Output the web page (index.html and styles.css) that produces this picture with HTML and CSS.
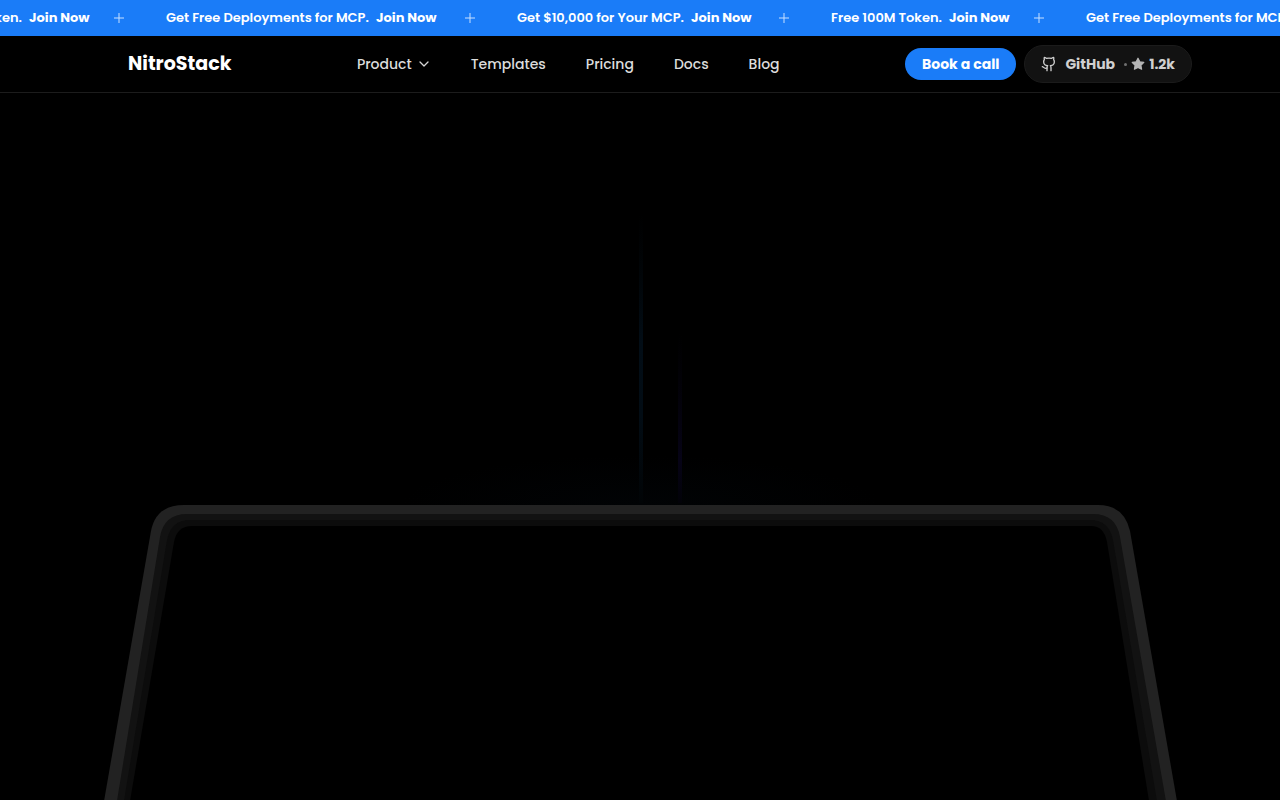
FILE: index.html
```html
<!DOCTYPE html>
<html lang="en">
<head>
<meta charset="utf-8">
<meta name="viewport" content="width=device-width, initial-scale=1">
<title>NitroStack</title>
<link rel="stylesheet" href="styles.css">
</head>
<body>
<div class="ticker">
  <div class="ticker-track">
    <a class="offer offer-token" href="#">Free 100M Token. <strong>Join Now</strong></a>
    <svg class="plus" viewBox="0 0 10 10"><path d="M5 0v10M0 5h10"/></svg>
    <a class="offer offer-deploy" href="#">Get Free Deployments for MCP. <strong>Join Now</strong></a>
    <svg class="plus" viewBox="0 0 10 10"><path d="M5 0v10M0 5h10"/></svg>
    <a class="offer offer-cash" href="#">Get $10,000 for Your MCP. <strong>Join Now</strong></a>
    <svg class="plus" viewBox="0 0 10 10"><path d="M5 0v10M0 5h10"/></svg>
    <a class="offer offer-token" href="#">Free 100M Token. <strong>Join Now</strong></a>
    <svg class="plus" viewBox="0 0 10 10"><path d="M5 0v10M0 5h10"/></svg>
    <a class="offer offer-deploy" href="#">Get Free Deployments for MCP. <strong>Join Now</strong></a>
  </div>
</div>
<header class="header">
  <a class="logo" href="#">NitroStack</a>
  <nav class="nav">
    <button class="nav-link nav-menu" type="button">Product
      <svg class="chevron" viewBox="0 0 14 14"><path d="M3 5l4 4 4-4"/></svg>
    </button>
    <a class="nav-link" href="#">Templates</a>
    <a class="nav-link" href="#">Pricing</a>
    <a class="nav-link" href="#">Docs</a>
    <a class="nav-link" href="#">Blog</a>
  </nav>
  <div class="actions">
    <a class="call" href="#">Book a call</a>
    <a class="github" href="#">
      <svg class="github-icon" viewBox="0 0 24 24"><path d="M15 22v-4a4.800 4.800 0 0 0-1-3.500c3 0 6-2 6-5.500.080-1.250-.270-2.480-1-3.500.280-1.150.280-2.350 0-3.500 0 0-1 0-3 1.500-2.640-.500-5.360-.500-8 0C6 2 5 2 5 2c-.300 1.150-.300 2.350 0 3.500A5.400 5.400 0 0 0 4 9c0 3.500 3 5.500 6 5.500-.390.490-.680 1.050-.850 1.650S8.930 17.380 9 18v4"/><path d="M9 18c-4.510 2-5-2-7-2"/></svg>
      <span>GitHub</span>
      <span class="stars"><i class="dot"></i><svg class="star" viewBox="0 0 24 24"><path d="M12 2l3.100 6.300 6.900 1-5 4.900 1.200 6.800-6.200-3.200L5.800 21 7 14.200 2 9.300l6.900-1z"/></svg>1.2k</span>
    </a>
  </div>
</header>
<main class="hero">
  <svg class="stage" viewBox="0 0 1280 707" aria-hidden="true">
    <defs>
      <linearGradient id="beam-cyan" x1="0" y1="0" x2="0" y2="1">
        <stop offset="0" stop-color="#02080c" stop-opacity="0"/>
        <stop offset=".45" stop-color="#020d16"/>
        <stop offset=".7" stop-color="#020c14"/>
        <stop offset="1" stop-color="#010406"/>
      </linearGradient>
      <linearGradient id="beam-violet" x1="0" y1="0" x2="0" y2="1">
        <stop offset="0" stop-color="#05030f" stop-opacity="0"/>
        <stop offset=".75" stop-color="#060316"/>
        <stop offset="1" stop-color="#020208"/>
      </linearGradient>
      <radialGradient id="glow">
        <stop offset="0" stop-color="#010305"/>
        <stop offset="1" stop-color="#000"/>
      </radialGradient>
    </defs>
    <ellipse cx="640" cy="412" rx="240" ry="50" fill="url(#glow)"/>
    <rect x="639" y="120" width="4" height="290" fill="url(#beam-cyan)"/>
    <rect x="678" y="240" width="4" height="170" fill="url(#beam-violet)"/>
    <path fill="#222" d="M103 714L151 438Q156 412 184 412H1098Q1124 412 1130 438L1178 714Z"/>
    <path fill="#121212" d="M116 714L160 444Q164 421 187 421H1093Q1116 421 1120 444L1167 714Z"/>
    <path fill="#0c0c0c" d="M123 714L167 447Q171 427 190 427H1090Q1109 427 1113 447L1158 714Z"/>
    <path fill="#000" d="M129 714L174 449Q177 433 192 433H1091Q1104 433 1107 449L1150 714Z"/>
  </svg>
</main>
</body>
</html>
```
FILE: styles.css
```css
* { box-sizing: border-box; }
body {
  margin: 0;
  min-height: 100vh;
  display: flex;
  flex-direction: column;
  overflow: hidden;
  background: #000;
  color: #fff;
  font-family: Poppins, Inter, "Liberation Sans", sans-serif;
}
a { color: inherit; text-decoration: none; }
svg { display: block; flex: none; fill: none; }

.ticker {
  height: 36px;
  overflow: hidden;
  background: #1a7cf8;
}
.ticker-track {
  display: flex;
  align-items: center;
  width: max-content;
  height: 100%;
  margin-left: -89px;
}
.offer { font-size: 13px; font-weight: 600; line-height: 20px; white-space: nowrap; }
.offer strong { margin-left: 4px; font-weight: 700; }
.offer-token { min-width: 181px; }
.offer-deploy { min-width: 277px; }
.offer-cash { min-width: 240px; }
.plus {
  width: 10px;
  height: 10px;
  margin: 0 42px 0 22px;
  stroke: #c8e0ff;
}

.header {
  display: flex;
  align-items: center;
  justify-content: space-between;
  height: 57px;
  padding: 0 88px 0 128px;
  border-bottom: 1px solid #1c1c1c;
}
.logo { font-size: 19px; font-weight: 700; line-height: 28px; }
.nav { display: flex; align-items: center; gap: 40px; }
.nav-link {
  padding: 0;
  border: 0;
  background: none;
  color: #dcdcdc;
  font: inherit;
  font-size: 14px;
  font-weight: 500;
  line-height: 20px;
}
.nav-menu { display: flex; align-items: center; gap: 5px; }
.chevron { width: 14px; height: 14px; stroke: #d6d6d6; stroke-width: 1.300; stroke-linecap: round; stroke-linejoin: round; }
.actions { display: flex; align-items: center; gap: 8px; }
.call, .github { font-size: 14px; font-weight: 700; line-height: 20px; border-radius: 20px; white-space: nowrap; }
.call { padding: 6px 17px; background: #1a7cf8; }
.github {
  display: flex;
  align-items: center;
  gap: 8px;
  padding: 8px 16px;
  border: 1px solid #1b1b1b;
  background: #121212;
  color: #d0d0d0;
}
.github-icon { width: 16px; height: 16px; stroke: #d0d0d0; stroke-width: 2; stroke-linecap: round; stroke-linejoin: round; }
.stars { display: flex; align-items: center; gap: 4px; padding-left: 1px; }
.dot { width: 3px; height: 3px; border-radius: 50%; background: #707070; }
.star { width: 14px; height: 14px; fill: #b5b5b5; stroke: #b5b5b5; stroke-width: 2; stroke-linejoin: round; }

.hero { flex: 1; min-height: 0; overflow: hidden; }
.stage { width: 100%; height: auto; }
```
